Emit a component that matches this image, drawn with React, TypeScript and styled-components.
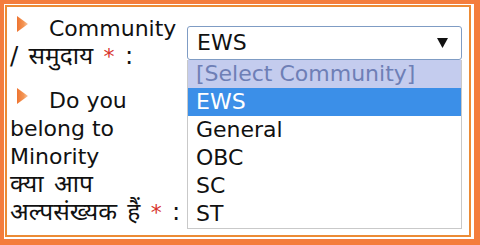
import React from "react";
import styled, { createGlobalStyle } from "styled-components";

const Global = createGlobalStyle`
  html, body { margin: 0; padding: 0; background: #ffffff; }
  body { width: 480px; height: 245px; overflow: hidden; }
`;

const Frame = styled.div`
  box-sizing: border-box;
  width: 480px;
  height: 245px;
  border-style: solid;
  border-color: #f47d3d;
  border-width: 4px 6px 6px 4px;
  background: #ffffff;
  padding: 1px 3px 2px 1px;
`;

const Inner = styled.div`
  box-sizing: border-box;
  height: 100%;
  border: 2px solid #ec8b35;
  background: #ffffff;
  padding: 8px 7px 0 3px;
  display: flex;
  flex-direction: column;
  gap: 16px;
  font-family: "DejaVu Sans", Verdana, "Noto Sans", sans-serif;
  font-size: 22px;
  line-height: 28px;
  color: #111111;
`;

const FormRow = styled.div<{ $align: "center" | "start" }>`
  display: grid;
  grid-template-columns: 177px 1fr;
  align-items: ${(p) => p.$align};
`;

const Label = styled.div`
  white-space: nowrap;
`;

const Hindi = styled.span`
  font-size: 24.5px;
  line-height: 1;
  word-spacing: 2.5px;
`;

const Star = styled.span`
  color: #d8342c;
  font-size: 22px;
`;

const BulletIcon = styled.svg`
  display: inline-block;
  width: 11px;
  height: 16px;
  margin: 0 21px 0 7px;
  vertical-align: 4px;
`;

const Field = styled.div`
  position: relative;
`;

const SelectBox = styled.div`
  box-sizing: border-box;
  height: 34px;
  border: 1px solid #7f9cc4;
  border-radius: 3px;
  background: #ffffff;
  display: flex;
  align-items: center;
  justify-content: space-between;
  padding: 0 13px 0 9px;
  color: #111111;
`;

const Arrow = styled.svg`
  width: 11px;
  height: 10px;
  display: block;
`;

const ListBox = styled.ul`
  position: absolute;
  top: 34px;
  left: 0;
  right: 0;
  margin: 0;
  padding: 0;
  list-style: none;
  background: #ffffff;
  border: 1px solid #c9c9c9;
  border-top: none;
  z-index: 2;
`;

const Option = styled.li<{ $kind: "placeholder" | "active" | "normal" }>`
  height: 28px;
  padding-left: 8px;
  background: ${(p) =>
    p.$kind === "placeholder" ? "#c4ccee" : p.$kind === "active" ? "#3b8fe8" : "#ffffff"};
  color: ${(p) =>
    p.$kind === "placeholder" ? "#6e7fb6" : p.$kind === "active" ? "#ffffff" : "#111111"};
`;

const Bullet = ({ id }: { id: string }) => (
  <BulletIcon viewBox="0 0 11 16" aria-hidden="true">
    <defs>
      <linearGradient id={id} x1="0" y1="0" x2="1" y2="0">
        <stop offset="0" stopColor="#ee7430" />
        <stop offset="0.6" stopColor="#f39555" />
        <stop offset="1" stopColor="#f8c7a2" />
      </linearGradient>
    </defs>
    <polygon points="0,0 11,8 0,16" fill={`url(#${id})`} />
  </BulletIcon>
);

const options: { text: string; kind: "placeholder" | "active" | "normal" }[] = [
  { text: "[Select Community]", kind: "placeholder" },
  { text: "EWS", kind: "active" },
  { text: "General", kind: "normal" },
  { text: "OBC", kind: "normal" },
  { text: "SC", kind: "normal" },
  { text: "ST", kind: "normal" },
];

export default function App() {
  return (
    <>
      <Global />
      <Frame>
        <Inner>
          <FormRow $align="center">
            <Label>
              <Bullet id="b1" />
              Community
              <br />
              <Hindi>
                / समुदाय <Star>*</Star> :
              </Hindi>
            </Label>
            <Field>
              <SelectBox>
                <span>EWS</span>
                <Arrow viewBox="0 0 11 10" aria-hidden="true">
                  <polygon points="0,0 11,0 5.5,10" fill="#111111" />
                </Arrow>
              </SelectBox>
              <ListBox>
                {options.map((o) => (
                  <Option key={o.text} $kind={o.kind}>
                    {o.text}
                  </Option>
                ))}
              </ListBox>
            </Field>
          </FormRow>
          <FormRow $align="start">
            <Label>
              <Bullet id="b2" />
              Do you
              <br />
              belong to
              <br />
              Minority
              <br />
              <Hindi>क्या आप</Hindi>
              <br />
              <Hindi>
                अल्पसंख्यक हैं <Star>*</Star> :
              </Hindi>
            </Label>
            <Field />
          </FormRow>
        </Inner>
      </Frame>
    </>
  );
}
